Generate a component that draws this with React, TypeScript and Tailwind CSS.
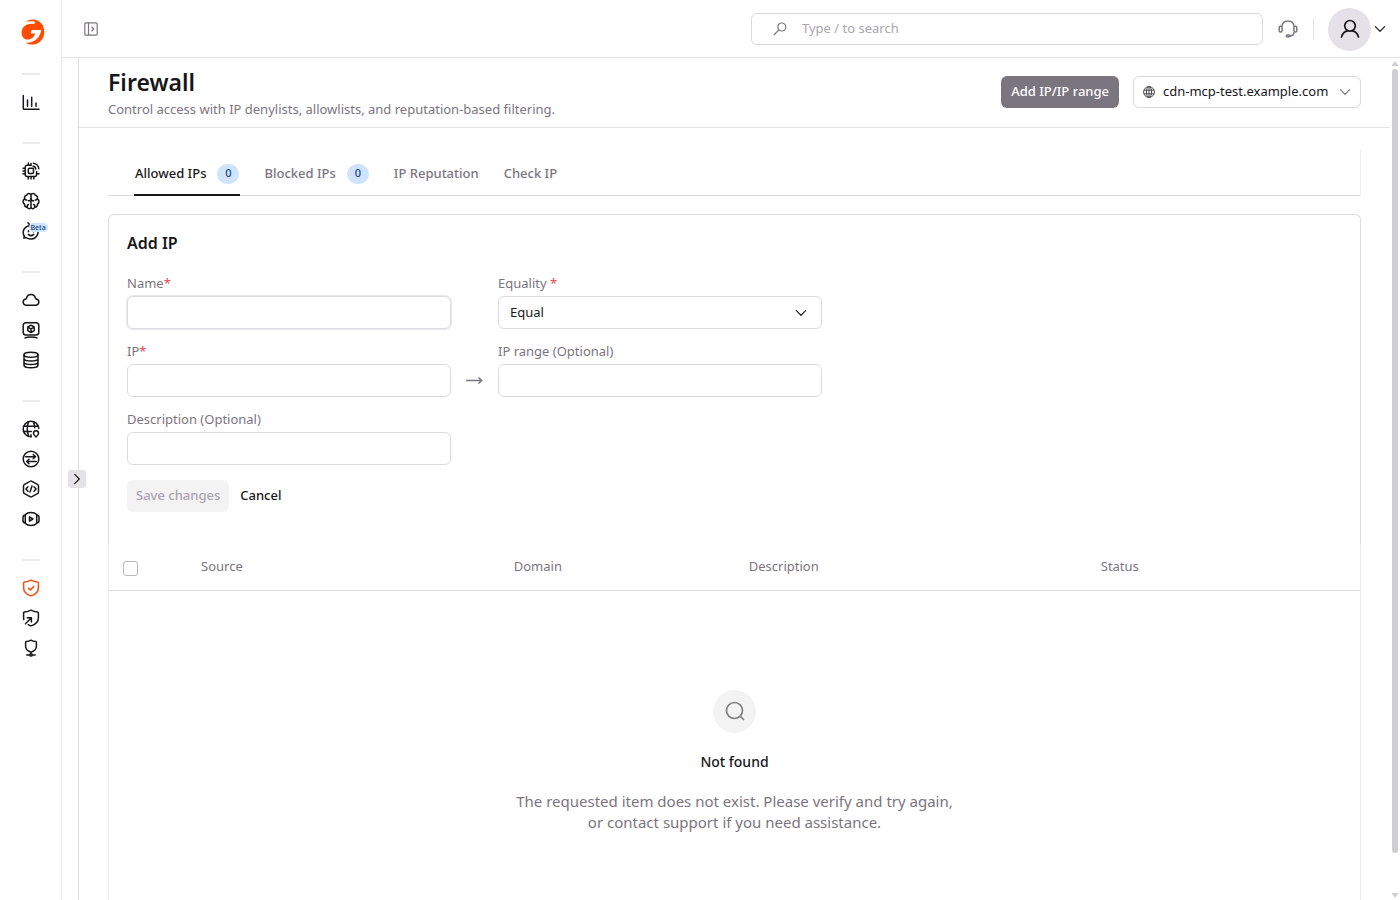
import React, { useState } from 'react';

const iconProps = {
  width: 18,
  height: 18,
  viewBox: '0 0 18 18',
  fill: 'none',
  stroke: 'currentColor',
  strokeWidth: 1.5,
  strokeLinecap: 'round' as const,
  strokeLinejoin: 'round' as const,
  'aria-hidden': true,
};

const ChartIcon = () => (
  <svg {...iconProps}>
    <path d="M1.300 2.500v12.700a1 1 0 0 0 1 1H17M5.500 7v6.200M9.700 4.200v9M14 10v3.200" />
  </svg>
);

const ChipIcon = () => (
  <svg {...iconProps}>
    <path d="M9 3.200H5.200a2 2 0 0 0-2 2v7.400a2 2 0 0 0 2 2h7.400a2 2 0 0 0 2-2V9.400" />
    <rect x="6.300" y="6.300" width="5.200" height="5.200" rx="1.200" />
    <path d="M6.400 1v2M9 1.600v1.600M6.200 14.800V17M9 14.800V17M11.800 14.800V17M1 6.300h2M1 9h2M1 11.800h2M14.800 11.800H17M11 4.200a3.200 3.200 0 0 1 2.800 2.900M11.400 1.200a6 6 0 0 1 5.400 5.600" />
  </svg>
);

const BrainIcon = () => (
  <svg {...iconProps}>
    <path d="M9 3v12M9 3C8.400 1 5 .8 4.800 3.300 2.800 3.600 2 5.500 2.700 7 .5 8 .5 11 2.500 12c-.3 2 1.300 3.300 2.800 3.100C6 17.500 8.700 17 9 15M9 3c.6-2 4-2.200 4.200.3 2 .3 2.800 2.200 2.100 3.700 2.200 1 2.200 4 .2 5 .3 2-1.300 3.300-2.800 3.100C12 17.500 9.300 17 9 15" />
    <path d="M9 6.500C9 8.300 7.500 9 6.300 8.700M9 6.500c0 1.800 1.500 2.500 2.700 2.200M2.700 7c.6.8 1.300 1 2 .9M15.300 7c-.6.8-1.300 1-2 .9M5.300 15c-.3-1.200.2-2.200 1.200-2.500M12.700 15c.3-1.200-.2-2.200-1.200-2.500" />
  </svg>
);

const AssistantIcon = () => (
  <svg {...iconProps}>
    <path d="M6 .8c1.300.8 1.600 1.800.8 3C3.500 4.800 1.200 7.200 1.200 10.400c0 1.200.4 2.500 1.100 3.600l-.5 2 2.200-.5c3.500 2.600 9 1.900 11-1.900 1.200-2 1.200-4.600.4-6.400" />
    <path d="M6.500 8.800v.9M11.500 8.800v.9M6.300 12.400c1.500 1.400 3.900 1.400 5.400 0" />
  </svg>
);

const CloudIcon = () => (
  <svg {...iconProps}>
    <path d="M4 14.200h10a3.200 3.200 0 0 0 .3-6.300c-.5-.1-.8-.4-.9-.9a4.500 4.500 0 0 0-8.800 0c-.1.500-.4.800-.9.900A3.200 3.200 0 0 0 4 14.200Z" />
  </svg>
);

const ServerIcon = () => (
  <svg {...iconProps}>
    <rect x="1.200" y="1.700" width="15.600" height="12.300" rx="2.800" />
    <path d="m9 4.200 3.200 1.800v3.600L9 11.500 5.800 9.600V6ZM5.800 6.100 9 7.900l3.200-1.800M9 7.900v3.500M3 16.900c2.500-1.100 9.500-1.100 12 0" />
  </svg>
);

const DatabaseIcon = () => (
  <svg {...iconProps}>
    <ellipse cx="9" cy="3.700" rx="7" ry="2.500" />
    <path d="M2 3.700v10.600c0 1.400 3.100 2.500 7 2.500s7-1.100 7-2.500V3.700M2 7.400c0 1.400 3.100 2.500 7 2.500s7-1.100 7-2.500M2 11c0 1.400 3.100 2.500 7 2.500s7-1.100 7-2.500" />
  </svg>
);

const GlobePinIcon = () => (
  <svg {...iconProps}>
    <path d="M9.300 16.800A7.800 7.800 0 1 1 16.800 8.500M1.300 6.200h15.200M1.300 11.500h8M6.500 1.800c-1.600 4.500-1.600 9.800.2 14.500M11.500 1.800c.7 2 1.100 4 1.200 6M9 16.800v-2" />
    <path d="M14 17c-1.600-1.300-2.500-2.500-2.500-3.700a2.500 2.500 0 0 1 5 0c0 1.200-.9 2.400-2.500 3.700Z" />
  </svg>
);

const TransferIcon = () => (
  <svg {...iconProps}>
    <circle cx="9" cy="9" r="7.800" />
    <path d="M3.700 6.800h9.800M11.200 4.500l2.300 2.300-2.300 2M14.300 11.500H4.800M7 9.300l-2.300 2.200L7 13.700" />
  </svg>
);

const CodeIcon = () => (
  <svg {...iconProps}>
    <path d="M8 1.400a2 2 0 0 1 2 0l5.400 2.900a2 2 0 0 1 1.100 1.800v5.800a2 2 0 0 1-1.100 1.800L10 16.600a2 2 0 0 1-2 0l-5.400-2.900a2 2 0 0 1-1.100-1.800V6.100a2 2 0 0 1 1.100-1.800Z" />
    <path d="M6 6.800 3.900 9 6 11.200M12 6.800 14.100 9 12 11.200M10 6l-2 6" />
  </svg>
);

const PlayIcon = () => (
  <svg {...iconProps}>
    <path d="M3.300 4.500C6 1.800 12 1.800 14.700 4.500M3.300 13.500c2.700 2.700 8.700 2.700 11.400 0M3.300 4.500v9M14.700 4.500v9M3.300 5C1.600 5.200 1 6 1 7.200v3.600c0 1.200.6 2 2.300 2.200M14.700 5c1.700.2 2.300 1 2.300 2.200v3.600c0 1.200-.6 2-2.300 2.200" />
    <path d="M7.500 6.900v4.200L10.900 9Z" />
  </svg>
);

const ShieldCheckIcon = () => (
  <svg {...iconProps}>
    <path d="M9 1.200c2 1.200 4.300 1.700 6.400 1.700a1 1 0 0 1 1 1v4.800c0 4-3 6.800-7.400 8.200-4.400-1.400-7.400-4.200-7.400-8.200V3.900a1 1 0 0 1 1-1C4.700 2.900 7 2.400 9 1.200Z" />
    <path d="m6.500 9.200 1.900 1.700 3.300-3.300" />
  </svg>
);

const ShieldArrowIcon = () => (
  <svg {...iconProps}>
    <path d="M1.800 10.500c-.2-.8-.2-1.500-.2-2.300V3.900a1 1 0 0 1 1-1C4.700 2.900 7 2.400 9 1.200c2 1.200 4.300 1.700 6.400 1.700a1 1 0 0 1 1 1v4.800c0 4-3 6.800-7.400 8.200-1-.3-1.900-.7-2.700-1.200" />
    <path d="M3.500 14.800 9.200 9M5.200 8.800h4.200V13" />
  </svg>
);

const ShieldNodeIcon = () => (
  <svg {...iconProps}>
    <path d="M9 1.200c1.500 1 3.200 1.300 4.600 1.300a.8.8 0 0 1 .8.8v3.900c0 3-2.100 4.900-5.400 6-3.300-1.100-5.400-3-5.400-6V3.300a.8.8 0 0 1 .8-.8c1.400 0 3.100-.3 4.600-1.300ZM9 13.200v1.400M4.800 15.900h2.600M10.600 15.900h2.600" />
    <circle cx="9" cy="15.900" r="1.200" />
  </svg>
);

const Logo = () => (
  <svg width="24" height="26" viewBox="0 0 24 26" aria-hidden="true">
    <path
      fill="#ff4c00"
      d="M4.500 3C8 .6 11.500 0 14.800 1c5 1.400 8.500 6 8.500 11.800 0 7.300-5 12.700-11.500 12.700-2.700 0-5.200-.5-7.300-1.800 8 .8 14.500-4.500 15.700-12.700h-9.700L9.600 14.600h4.600c-1 3.700-4 6-7.600 6C2.900 20.600.5 17.600.6 13.500.8 7.800 5.600 4.500 12 4.900l1.500.2.500-2.300c-3.200-.6-6.400-.6-9.500.2Z"
    />
    <path fill="#ff4c00" d="M14.300 2.500 13.400 8H21l1-1.500c-1.500-2.200-4-3.700-7.700-4Z" />
    <path fill="#ff4c00" d="M6 6.500h7.800l-.4 2.300h7.100L20.200 11h-9.700l-1 3.600-4 2Z" />
  </svg>
);

const PanelIcon = () => (
  <svg width="14" height="14" viewBox="0 0 14 14" fill="none" stroke="currentColor" strokeWidth="1.200" aria-hidden="true">
    <rect x=".8" y=".8" width="12.400" height="12.400" rx="1.300" />
    <path d="M4.500 1v12M7.500 4.800 9.800 7 7.500 9.200" />
  </svg>
);

const SearchIcon = () => (
  <svg width="14" height="14" viewBox="0 0 14 14" fill="none" stroke="currentColor" strokeWidth="1.200" aria-hidden="true">
    <circle cx="8.800" cy="5" r="4" />
    <path d="M5.900 7.800.8 13" />
  </svg>
);

const HeadsetIcon = () => (
  <svg width="20" height="20" viewBox="0 0 20 20" fill="none" stroke="currentColor" strokeWidth="1.500" aria-hidden="true">
    <path d="M3.800 7.500C4.300 4 6.500 2 10 2s5.700 2 6.200 5.500M16.200 13.200c-.3 2.300-1.700 3.600-4 3.800" />
    <rect x="1.200" y="7.300" width="2.900" height="5.800" rx="1.300" />
    <rect x="15.900" y="7.300" width="2.900" height="5.800" rx="1.300" />
    <rect x="8.300" y="15.900" width="3.800" height="1.900" rx=".9" />
  </svg>
);

const UserIcon = () => (
  <svg width="20" height="20" viewBox="0 0 20 20" fill="none" stroke="currentColor" strokeWidth="1.700" strokeLinecap="round" aria-hidden="true">
    <circle cx="10" cy="6.800" r="5.300" />
    <path d="M1.500 18c1-3.400 3.500-5.900 6.500-6.400M18.500 18c-1-3.400-3.500-5.900-6.500-6.400" />
  </svg>
);

const ChevronDown = ({ className = '' }: { className?: string }) => (
  <svg className={className} width="12" height="12" viewBox="0 0 12 12" fill="none" stroke="currentColor" strokeWidth="1.200" strokeLinecap="round" strokeLinejoin="round" aria-hidden="true">
    <path d="m1.400 3.700 4.600 4.600 4.600-4.600" />
  </svg>
);

const GlobeIcon = () => (
  <svg width="12" height="12" viewBox="0 0 12 12" fill="none" stroke="currentColor" strokeWidth="1" aria-hidden="true">
    <circle cx="6" cy="6" r="5.400" />
    <ellipse cx="6" cy="6" rx="2.600" ry="5.400" />
    <path d="M1 4.200h10M1 7.800h10M6 .6v10.800" />
  </svg>
);

const ArrowRight = () => (
  <svg width="17" height="8" viewBox="0 0 17 8" fill="none" stroke="currentColor" strokeWidth="1.500" aria-hidden="true">
    <path d="M0 3.500h16M12.500.5l3.200 3-3.200 3" />
  </svg>
);

interface NavItem {
  label: string;
  icon: React.FC;
  beta?: boolean;
  active?: boolean;
}

const navGroups: NavItem[][] = [
  [{ label: 'Statistics', icon: ChartIcon }],
  [
    { label: 'Edge', icon: ChipIcon },
    { label: 'AI', icon: BrainIcon },
    { label: 'Assistant', icon: AssistantIcon, beta: true },
  ],
  [
    { label: 'Cloud', icon: CloudIcon },
    { label: 'Hosting', icon: ServerIcon },
    { label: 'Storage', icon: DatabaseIcon },
  ],
  [
    { label: 'DNS', icon: GlobePinIcon },
    { label: 'CDN', icon: TransferIcon },
    { label: 'FastEdge', icon: CodeIcon },
    { label: 'Streaming', icon: PlayIcon },
  ],
  [
    { label: 'WAAP', icon: ShieldCheckIcon, active: true },
    { label: 'DDoS protection', icon: ShieldArrowIcon },
    { label: 'Network protection', icon: ShieldNodeIcon },
  ],
];

const Sidebar = () => (
  <nav aria-label="Products" className="flex w-[62px] shrink-0 flex-col items-center border-r border-[#e9e9eb] pt-[19px]">
    <a href="#home" aria-label="Home" className="mb-7 ml-1">
      <Logo />
    </a>
    {navGroups.map((group, i) => (
      <ul key={i} className="mb-[25px] flex flex-col items-center">
        <li aria-hidden="true" className="mb-3 h-0.5 w-[18px] bg-[#ebebed]" />
        {group.map(({ label, icon: Icon, beta, active }) => (
          <li key={label} className="relative">
            <a
              href={`#${label}`}
              aria-label={label}
              className={`flex h-[30px] items-center ${active ? 'text-[#f24f13]' : 'text-[#171719]'}`}
            >
              <Icon />
            </a>
            {beta && (
              <span className="absolute top-[7px] left-[7px] rounded-full bg-[#cfe3fd] px-0.5 text-[7px] leading-[9px] font-medium text-[#13457f]">
                Beta
              </span>
            )}
          </li>
        ))}
      </ul>
    ))}
  </nav>
);

const TopBar = () => (
  <header className="flex h-[58px] shrink-0 items-center justify-between border-b border-[#e2e2e4] pt-px pr-3.5 pl-[22px]">
    <button type="button" aria-label="Toggle menu" className="text-[#7b7580]">
      <PanelIcon />
    </button>
    <div className="flex items-center">
      <label className="flex h-8 w-[512px] items-center rounded-md border border-[#dadadc] pl-[21px] text-[#7b7580]">
        <SearchIcon />
        <input
          type="search"
          aria-label="Search"
          placeholder="Type / to search"
          className="ml-[15px] flex-1 text-[13px] outline-none placeholder:text-[#aaa5b0]"
        />
      </label>
      <button type="button" aria-label="Support" className="ml-[15px] text-[#7b7580]">
        <HeadsetIcon />
      </button>
      <span className="mr-3.5 ml-[15px] h-[22px] w-px bg-[#dfdfe2]" />
      <button type="button" aria-label="Account" className="flex items-center gap-[3px] text-[#171719]">
        <span className="flex size-[43px] items-center justify-center rounded-full bg-[#e4e2e8]">
          <UserIcon />
        </span>
        <ChevronDown />
      </button>
    </div>
  </header>
);

interface FieldProps {
  id: string;
  label: string;
  required?: boolean;
  focused?: boolean;
}

const Field: React.FC<FieldProps> = ({ id, label, required, focused }) => (
  <div className="w-[324px]">
    <label htmlFor={id} className="mb-[3px] block text-[13px] leading-5 text-[#7b7580]">
      {label}
      {required && <span className="text-[#e5484d]">*</span>}
    </label>
    <input
      id={id}
      type="text"
      className={`block h-[33px] w-full rounded-md border border-[#dcdce0] px-3 text-[13px] outline-none focus:ring-2 focus:ring-[#ededf1] ${
        focused ? 'ring-1 ring-[#e8e8ee]' : ''
      }`}
    />
  </div>
);

const tabs = [
  { name: 'Allowed IPs', count: 0 },
  { name: 'Blocked IPs', count: 0 },
  { name: 'IP Reputation' },
  { name: 'Check IP' },
];

const Tabs = () => {
  const [activeTab, setActiveTab] = useState('Allowed IPs');

  return (
    <div className="border-r border-[#efeff1]">
      <div role="tablist" className="flex gap-[23px] border-b border-[#dcdce0] pl-[26px]">
        {tabs.map(({ name, count }) => (
          <button
            key={name}
            type="button"
            role="tab"
            aria-selected={name === activeTab}
            onClick={() => setActiveTab(name)}
            className={`-mb-px flex h-[47px] items-center gap-[11px] border-b-2 px-px pt-1 text-[13px] font-medium ${
              name === activeTab ? 'border-[#171719] text-[#171719]' : 'border-transparent text-[#7b7580]'
            }`}
          >
            {name}
            {count !== undefined && (
              <span className="flex h-5 w-[22px] items-center justify-center rounded-full bg-[#cfe3fd] text-[11px] text-[#13457f]">
                {count}
              </span>
            )}
          </button>
        ))}
      </div>
    </div>
  );
};

const AddIpForm = () => (
  <form
    className="rounded-t-md border border-b-0 border-[#dcdce0] px-[18px] pt-4 pb-8"
    onSubmit={(e) => e.preventDefault()}
  >
    <h2 className="mb-[18px] text-base leading-6 font-semibold text-[#171719]">Add IP</h2>
    <div className="flex gap-[47px]">
      <Field id="name" label="Name" required focused />
      <div className="w-[324px]">
        <label htmlFor="equality" className="mb-[3px] block text-[13px] leading-5 text-[#7b7580]">
          Equality <span className="text-[#e5484d]">*</span>
        </label>
        <div className="relative">
          <select
            id="equality"
            className="block h-[33px] w-full appearance-none rounded-md border border-[#dcdce0] bg-white px-[11px] text-[13px] text-[#171719] outline-none"
          >
            <option>Equal</option>
            <option>Not equal</option>
          </select>
          <ChevronDown className="pointer-events-none absolute top-[11px] right-[15px] text-[#171719]" />
        </div>
      </div>
    </div>
    <div className="mt-3 flex items-end">
      <Field id="ip" label="IP" required />
      <span className="flex h-[33px] w-[47px] items-center justify-center text-[#7b7580]">
        <ArrowRight />
      </span>
      <Field id="ip-range" label="IP range (Optional)" />
    </div>
    <div className="mt-3">
      <Field id="description" label="Description (Optional)" />
    </div>
    <div className="mt-[15px] flex h-8 gap-[11px] text-[13px] font-medium">
      <button type="submit" disabled className="rounded-md bg-[#f3f3f4] px-[9px] text-[#aaa5b0]">
        Save changes
      </button>
      <button type="button" className="text-[#171719]">
        Cancel
      </button>
    </div>
  </form>
);

const IpTable = () => (
  <div className="border-x border-[#ececee]">
    <table className="w-full table-fixed border-b border-[#dcdce0] text-left text-[13px] text-[#7b7580]">
      <thead>
        <tr className="h-[46px]">
          <th className="w-[92px] pt-1 pl-3.5">
            <input
              type="checkbox"
              aria-label="Select all"
              className="block size-[15px] appearance-none rounded-[3px] border border-[#b9b6be]"
            />
          </th>
          <th className="w-1/4 font-normal">Source</th>
          <th className="w-[235px] font-normal">Domain</th>
          <th className="w-[352px] font-normal">Description</th>
          <th className="font-normal">Status</th>
        </tr>
      </thead>
    </table>
    <div className="flex flex-col items-center pt-[99px] pb-32 text-center">
      <span className="flex size-[43px] items-center justify-center rounded-full bg-[#f3f3f3] text-[#808080]">
        <svg width="20" height="20" viewBox="0 0 20 20" fill="none" stroke="currentColor" strokeWidth="1.700" strokeLinecap="round" aria-hidden="true">
          <circle cx="9.500" cy="9.500" r="8" />
          <path d="m15.500 15.500 3 3" />
        </svg>
      </span>
      <h3 className="mt-[18px] text-sm leading-[22px] font-medium text-[#171719]">Not found</h3>
      <p className="mt-[18px] text-[15px] leading-[21px] text-[#7b7580]">
        The requested item does not exist. Please verify and try again,
        <br />
        or contact support if you need assistance.
      </p>
    </div>
  </div>
);

const PageHeader = () => (
  <div className="flex items-center justify-between border-b border-[#e2e2e4] px-[29px] pt-[7px] pb-2">
    <div>
      <h1 className="text-[23px] leading-[34px] font-semibold text-[#171719]">Firewall</h1>
      <p className="text-[13px] leading-5 text-[#7b7580]">
        Control access with IP denylists, allowlists, and reputation-based filtering.
      </p>
    </div>
    <div className="flex h-8 gap-3.5 text-[13px] font-medium">
      <button type="button" className="rounded-md bg-[#7b7580] px-2.5 text-white">
        Add IP/IP range
      </button>
      <button type="button" className="flex w-[228px] items-center rounded-md border border-[#dadadc] px-[9px] font-normal text-[#171719]">
        <span className="text-[#4a464e]">
          <GlobeIcon />
        </span>
        <span className="ml-2 flex-1 text-left">cdn-mcp-test.example.com</span>
        <ChevronDown className="text-[#7b7580]" />
      </button>
    </div>
  </div>
);

const Scrollbar = () => (
  <div aria-hidden="true" className="flex w-2.5 shrink-0 flex-col items-center pt-[3px] pb-0.5 text-[#cfced4]">
    <svg width="8" height="5" viewBox="0 0 8 5" fill="currentColor">
      <path d="M4 0l3.500 5h-7Z" />
    </svg>
    <div className="mt-[3px] mb-10 w-1.5 flex-1 rounded-full bg-[#cfced4]" />
    <svg width="8" height="5" viewBox="0 0 8 5" fill="currentColor">
      <path d="M4 5L.5 0h7Z" />
    </svg>
  </div>
);

export default function App() {
  return (
    <div className="flex h-screen overflow-hidden bg-white font-['Noto_Sans',sans-serif] text-[#171719]">
      <Sidebar />
      <div className="flex min-w-0 flex-1 flex-col">
        <TopBar />
        <div className="flex min-h-0 flex-1">
          <aside className="relative w-[17px] shrink-0 border-r border-[#dcdce0]">
            <button
              type="button"
              aria-label="Expand menu"
              className="absolute top-1/2 left-1.5 flex size-[18px] -translate-y-1/2 items-center justify-center rounded-[3px] bg-[#e4e2e8] text-[#171719]"
            >
              <ChevronDown className="-rotate-90" />
            </button>
          </aside>
          <main className="min-w-0 flex-1 overflow-y-auto [scrollbar-width:none]">
            <PageHeader />
            <div className="px-[29px] pt-[21px]">
              <Tabs />
              <section className="mt-[18px]">
                <AddIpForm />
                <IpTable />
              </section>
            </div>
          </main>
          <Scrollbar />
        </div>
      </div>
    </div>
  );
}
